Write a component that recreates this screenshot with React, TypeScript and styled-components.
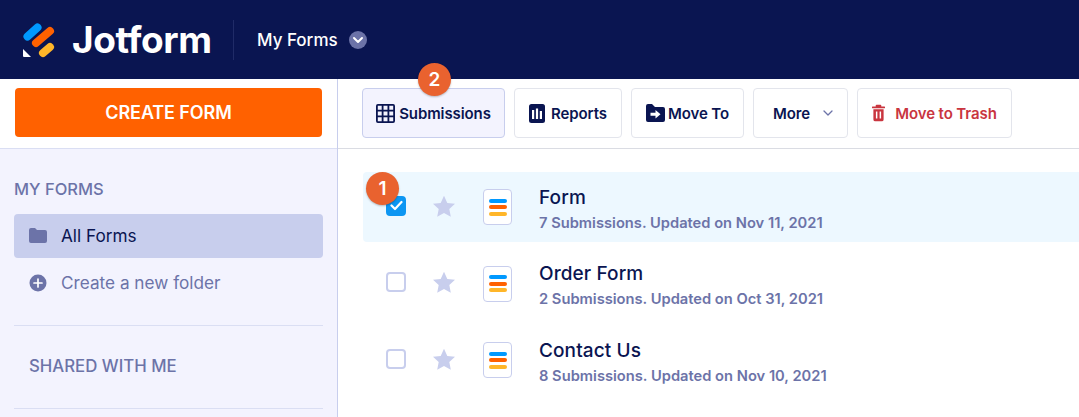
import React from "react";
import styled, { createGlobalStyle } from "styled-components";

const Global = createGlobalStyle`
  html, body { margin: 0; padding: 0; background: #fff; overflow: hidden; }
  body { font-family: Inter, "Liberation Sans", sans-serif; -webkit-font-smoothing: antialiased; }
`;

const Page = styled.div`
  width: 1079px;
  height: 417px;
  display: flex;
  flex-direction: column;
  overflow: hidden;
`;

const Header = styled.header`
  height: 79px;
  flex: none;
  background: #0a1551;
  display: flex;
  align-items: center;
  padding-left: 23px;
  box-sizing: border-box;
`;

const Brand = styled.div`
  display: flex;
  align-items: center;
  gap: 16px;
  width: 210px;
  height: 36px;
`;

const BrandName = styled.span`
  font-size: 37px;
  font-weight: 700;
  letter-spacing: -0.4px;
  color: #fff;
  line-height: 36px;
`;

const HeaderDivider = styled.div`
  width: 1px;
  height: 40px;
  background: #202b67;
  margin-right: 23px;
`;

const HeaderTitle = styled.span`
  font-size: 17px;
  font-weight: 500;
  color: #fff;
  margin-right: 11px;
`;

const HeaderCaret = styled.span`
  width: 18px;
  height: 18px;
  border-radius: 50%;
  background: #6c73a8;
  display: flex;
  align-items: center;
  justify-content: center;
`;

const Body = styled.div`
  flex: 1;
  display: flex;
  min-height: 0;
`;

const Sidebar = styled.aside`
  width: 338px;
  flex: none;
  box-sizing: border-box;
  border-right: 1px solid #c8ceed;
  background: #f3f3fe;
  display: flex;
  flex-direction: column;
`;

const CreateArea = styled.div`
  background: #fff;
  height: 70px;
  flex: none;
  box-sizing: border-box;
  padding: 9px 15px 0;
  border-bottom: 1px solid #dadef3;
`;

const CreateButton = styled.button`
  width: 307px;
  height: 49px;
  border: 0;
  border-radius: 4px;
  background: #ff6100;
  color: #fff;
  font: 600 18px Inter, sans-serif;
  letter-spacing: -0.1px;
`;

const SideSection = styled.div`
  padding: 30px 14px 0;
  display: flex;
  flex-direction: column;
`;

const SideHeading = styled.div`
  font-size: 16.5px;
  font-weight: 500;
  color: #6c73a8;
  line-height: 20px;
  margin-bottom: 15px;
`;

const SideItem = styled.div<{ $active?: boolean }>`
  height: 44px;
  box-sizing: border-box;
  border-radius: 4px;
  display: flex;
  align-items: center;
  gap: 14px;
  padding: 0 0 1px 15px;
  margin-bottom: 3px;
  font-size: 17.2px;
  color: ${(p) => (p.$active ? "#0a1551" : "#6c73a8")};
  background: ${(p) => (p.$active ? "#c8ceed" : "transparent")};
`;

const SideRule = styled.div`
  height: 1px;
  background: #dadef3;
  margin-top: 17px;
`;

const SharedHeading = styled(SideHeading)`
  font-size: 16.8px;
  padding-left: 15px;
  margin: 30px 0 15px;
`;

const Main = styled.main`
  flex: 1;
  display: flex;
  flex-direction: column;
  min-width: 0;
`;

const Toolbar = styled.div`
  height: 70px;
  flex: none;
  box-sizing: border-box;
  padding: 9px 0 0 24px;
  display: flex;
  gap: 9px;
  border-bottom: 1px solid #dadce3;
  position: relative;
`;

const ToolButton = styled.button<{ $w: number; $gap: number; $shift?: number; $selected?: boolean; $danger?: boolean }>`
  width: ${(p) => p.$w}px;
  height: 50px;
  box-sizing: border-box;
  border-radius: 4px;
  border: 1px solid ${(p) => (p.$selected ? "#c8ceed" : "#e3e5ec")};
  background: ${(p) => (p.$selected ? "#f3f3fe" : "#fff")};
  color: ${(p) => (p.$danger ? "#c9353f" : "#0a1551")};
  font: 600 15px Inter, sans-serif;
  letter-spacing: -0.1px;
  display: flex;
  align-items: center;
  justify-content: center;
  padding: 0 0 0 ${(p) => p.$shift ?? 0}px;
  gap: ${(p) => p.$gap}px;
`;

const Badge = styled.span<{ $left: number; $top: number }>`
  position: absolute;
  left: ${(p) => p.$left}px;
  top: ${(p) => p.$top}px;
  width: 33px;
  height: 33px;
  border-radius: 50%;
  background: #e9622f;
  color: #fff;
  font: 600 19px Inter, sans-serif;
  display: flex;
  align-items: center;
  justify-content: center;
  box-shadow: 0 1px 2px rgba(0, 0, 0, 0.25);
  z-index: 2;
`;

const List = styled.div`
  padding: 23px 0 0 25px;
  display: flex;
  flex-direction: column;
  gap: 6.5px;
  position: relative;
`;

const Row = styled.div<{ $selected?: boolean }>`
  height: 70px;
  display: flex;
  align-items: center;
  padding-left: 23px;
  border-radius: 4px 0 0 4px;
  background: ${(p) => (p.$selected ? "#edf8ff" : "transparent")};
`;

const Check = styled.span<{ $checked?: boolean }>`
  width: 20px;
  height: 20px;
  box-sizing: border-box;
  border-radius: 4px;
  border: 2px solid ${(p) => (p.$checked ? "#0d96f2" : "#c8ceed")};
  background: ${(p) => (p.$checked ? "#0d96f2" : "#fff")};
  display: flex;
  align-items: center;
  justify-content: center;
  margin: 0 26px 3px 0;
`;

const StarWrap = styled.span`
  display: flex;
  margin: 0 27px 2px 0;
`;

const FormTile = styled.span`
  width: 29px;
  height: 36px;
  box-sizing: border-box;
  border: 1px solid #c8ceed;
  border-radius: 4px;
  background: #fff;
  display: flex;
  flex-direction: column;
  align-items: center;
  justify-content: center;
  gap: 2.5px;
  margin-right: 27px;
`;

const TileBar = styled.span<{ $c: string }>`
  width: 18px;
  height: 4px;
  border-radius: 2px;
  background: ${(p) => p.$c};
`;

const RowText = styled.div`
  display: flex;
  flex-direction: column;
  padding-top: 4px;
`;

const RowTitle = styled.div`
  font-size: 19px;
  font-weight: 500;
  letter-spacing: 0.1px;
  color: #0a1551;
  line-height: 24px;
`;

const RowMeta = styled.div`
  font-size: 14.7px;
  font-weight: 600;
  color: #6c73a8;
  line-height: 20px;
  margin-top: 3px;
`;

const Logo = () => (
  <svg width="33" height="36" viewBox="0 0 33 36" fill="none">
    <path d="M4.5 14.5 L14.5 5.5" stroke="#0099ff" strokeWidth="8" strokeLinecap="round" />
    <path d="M13 21 L27 9" stroke="#ff6100" strokeWidth="8" strokeLinecap="round" />
    <path d="M20 31 L27 25" stroke="#ffb629" strokeWidth="8" strokeLinecap="round" />
    <path d="M0 27 L0 34 Q0 35 1 35 L8 35 Z" fill="#fff" />
  </svg>
);

const GridIcon = () => (
  <svg width="19" height="19" viewBox="0 0 19 19" fill="none" stroke="#0a1551" strokeWidth="1.8">
    <rect x="0.9" y="0.9" width="17.2" height="17.2" rx="1" />
    <path d="M6.6 1v17M12.4 1v17M1 6.6h17M1 12.4h17" />
  </svg>
);

const ReportIcon = () => (
  <svg width="16" height="19" viewBox="0 0 16 19">
    <rect width="16" height="19" rx="2.5" fill="#0a1551" />
    <path d="M3 6h2.2v9H3zM6.9 4.5h2.2V15H6.9zM10.8 7H13v8h-2.2z" fill="#fff" />
  </svg>
);

const MoveIcon = () => (
  <svg width="19" height="18" viewBox="0 0 19 18">
    <path d="M0 2a2 2 0 0 1 2-2h4l3 3h8a2 2 0 0 1 2 2v11a2 2 0 0 1-2 2H2a2 2 0 0 1-2-2z" fill="#0a1551" />
    <path d="M4.5 8.8h5V6l5 4.3-5 4.3v-2.8h-5z" fill="#fff" />
  </svg>
);

const TrashIcon = () => (
  <svg width="13" height="18" viewBox="0 0 14 18">
    <path d="M5 0h4a1 1 0 0 1 1 1v1h3.2a.8.8 0 0 1 0 2H.8a.8.8 0 0 1 0-2H4V1a1 1 0 0 1 1-1z" fill="#c9353f" />
    <path fillRule="evenodd" d="M1.5 5h11v11a2 2 0 0 1-2 2h-7a2 2 0 0 1-2-2zM4.2 7.5v7.5h1.6V7.5zM8.2 7.5v7.5h1.6V7.5z" fill="#c9353f" />
  </svg>
);

const Chevron = ({ color, size, width }: { color: string; size: number; width: number }) => (
  <svg width={size} height={size} viewBox="0 0 12 12" fill="none" stroke={color} strokeWidth={width} strokeLinecap="round" strokeLinejoin="round">
    <path d="M2 4l4 4 4-4" />
  </svg>
);

const Star = () => (
  <svg width="24" height="23" viewBox="0 0 24 23">
    <path d="M12 .8l3.3 7.1 7.7.9-5.7 5.3 1.5 7.7L12 18l-6.8 3.8 1.5-7.7L1 8.8l7.7-.9z" fill="#c8ceed" />
  </svg>
);

const FolderIcon = () => (
  <svg width="18" height="15" viewBox="0 0 18 15">
    <path d="M0 2a2 2 0 0 1 2-2h4l2 2h8a2 2 0 0 1 2 2v9a2 2 0 0 1-2 2H2a2 2 0 0 1-2-2z" fill="#6c73a8" />
  </svg>
);

const PlusIcon = () => (
  <svg width="18" height="18" viewBox="0 0 18 18">
    <circle cx="9" cy="9" r="8.5" fill="#6c73a8" />
    <path d="M9 5v8M5 9h8" stroke="#fff" strokeWidth="1.7" strokeLinecap="round" />
  </svg>
);

const Tick = () => (
  <svg width="13" height="11" viewBox="0 0 13 11" fill="none" stroke="#fff" strokeWidth="2.2" strokeLinecap="round" strokeLinejoin="round">
    <path d="M1.5 5.5l3.5 3.5 6.5-7" />
  </svg>
);

const forms = [
  { title: "Form", meta: "7 Submissions. Updated on Nov 11, 2021", selected: true },
  { title: "Order Form", meta: "2 Submissions. Updated on Oct 31, 2021" },
  { title: "Contact Us", meta: "8 Submissions. Updated on Nov 10, 2021" },
];

export default function App() {
  return (
    <Page>
      <Global />
      <Header>
        <Brand>
          <Logo />
          <BrandName>Jotform</BrandName>
        </Brand>
        <HeaderDivider />
        <HeaderTitle>My Forms</HeaderTitle>
        <HeaderCaret>
          <Chevron color="#fff" size={12} width={2} />
        </HeaderCaret>
      </Header>
      <Body>
        <Sidebar>
          <CreateArea>
            <CreateButton>CREATE FORM</CreateButton>
          </CreateArea>
          <SideSection>
            <SideHeading>MY FORMS</SideHeading>
            <SideItem $active>
              <FolderIcon />
              All Forms
            </SideItem>
            <SideItem>
              <PlusIcon />
              Create a new folder
            </SideItem>
            <SideRule />
            <SharedHeading>SHARED WITH ME</SharedHeading>
            <SideRule />
          </SideSection>
        </Sidebar>
        <Main>
          <Toolbar>
            <ToolButton $w={143} $gap={4} $selected>
              <GridIcon />
              Submissions
            </ToolButton>
            <ToolButton $w={108} $gap={6}>
              <ReportIcon />
              Reports
            </ToolButton>
            <ToolButton $w={113} $gap={3}>
              <MoveIcon />
              Move To
            </ToolButton>
            <ToolButton $w={95} $gap={12} $shift={6}>
              More
              <Chevron color="#6c73a8" size={12} width={1.3} />
            </ToolButton>
            <ToolButton $w={155} $gap={10} $danger>
              <TrashIcon />
              Move to Trash
            </ToolButton>
            <Badge $left={80} $top={-16}>2</Badge>
          </Toolbar>
          <List>
            <Badge $left={28} $top={23}>1</Badge>
            {forms.map((f) => (
              <Row key={f.title} $selected={f.selected}>
                <Check $checked={f.selected}>{f.selected && <Tick />}</Check>
                <StarWrap>
                  <Star />
                </StarWrap>
                <FormTile>
                  <TileBar $c="#0099ff" />
                  <TileBar $c="#ff6100" />
                  <TileBar $c="#ffb629" />
                </FormTile>
                <RowText>
                  <RowTitle>{f.title}</RowTitle>
                  <RowMeta>{f.meta}</RowMeta>
                </RowText>
              </Row>
            ))}
          </List>
        </Main>
      </Body>
    </Page>
  );
}
